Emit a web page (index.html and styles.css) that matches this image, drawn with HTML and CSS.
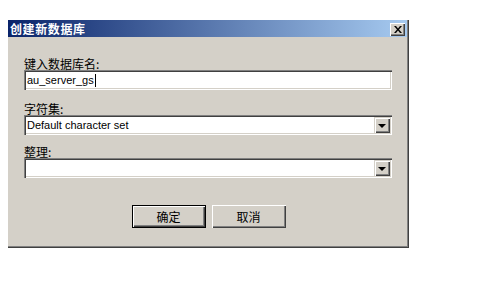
FILE: index.html
```html
<!DOCTYPE html>
<html lang="zh-CN">
<head>
  <meta charset="UTF-8">
  <title>创建新数据库</title>
  <link rel="stylesheet" href="styles.css">
</head>
<body>

  <div class="dialog">
    <div class="titlebar">
      <span class="title">创建新数据库</span>
      <span class="close">
        <svg width="8" height="7" viewBox="0 0 8 7">
          <path d="M0 0h2l2 2.5 2-2.5h2l-3 3.5 3 3.5h-2l-2-2.5-2 2.5h-2l3-3.5z" fill="#000"/>
        </svg>
      </span>
    </div>

    <div class="content">
      <label>键入数据库名:</label>
      <div class="field"><span>au_server_gs</span><span class="caret"></span></div>

      <label class="charset">字符集:</label>
      <div class="field select">
        <span>Default character set</span>
        <span class="arrow"><i></i></span>
      </div>

      <label class="collation">整理:</label>
      <div class="field select">
        <span></span>
        <span class="arrow"><i></i></span>
      </div>

      <div class="buttons">
        <div class="btn default">确定</div>
        <div class="btn">取消</div>
      </div>
    </div>
  </div>

</body>
</html>
```

FILE: styles.css
```css
body {
  margin: 0;
  background-color: #ffffff;
  font-family: "Noto Sans CJK SC", sans-serif;
  font-size: 12px;
  color: #000000;
}

.dialog {
  margin: 20px 0 0 8px;
  width: 401px;
  height: 228px;
  box-sizing: border-box;
  background-color: #d4d0c8;
  box-shadow: inset -1px -1px #404040, inset -2px -2px #808080;
}

.titlebar {
  display: flex;
  align-items: center;
  justify-content: space-between;
  height: 17px;
  margin-right: 2px;
  padding: 0 2px 0 2px;
  background: linear-gradient(to right, #0a246a, #a6caf0);
}

.title {
  color: #ffffff;
  font-weight: bold;
  letter-spacing: 0.6px;
  line-height: 17px;
}

.close {
  display: flex;
  align-items: center;
  justify-content: center;
  width: 15px;
  height: 13px;
  margin-top: 1px;
  background-color: #d4d0c8;
  box-shadow: inset 1px 1px #ffffff, inset -1px -1px #404040, inset -2px -2px #808080;
}

.content {
  padding: 21px 17px 0 16px;
}

label {
  display: block;
  line-height: 12px;
}

label.charset {
  margin-top: 13px;
}

label.collation {
  margin-top: 11px;
}

.field {
  display: flex;
  align-items: center;
  height: 20px;
  box-sizing: border-box;
  padding: 2px 2px 2px 3px;
  background-color: #ffffff;
  font-family: "Liberation Sans", sans-serif;
  font-size: 11px;
  box-shadow: inset 1px 1px #808080, inset 2px 2px #404040,
              inset -1px -1px #ffffff, inset -2px -2px #d4d0c8;
}

.caret {
  width: 1px;
  height: 13px;
  margin-left: 1px;
  background-color: #000000;
}

.select span:first-child {
  flex: 1;
}

.arrow {
  display: flex;
  align-items: center;
  justify-content: center;
  width: 16px;
  height: 16px;
  background-color: #d4d0c8;
  box-shadow: inset 1px 1px #d4d0c8, inset 2px 2px #ffffff,
              inset -1px -1px #404040, inset -2px -2px #808080;
}

.arrow i {
  width: 0;
  height: 0;
  border-left: 4px solid transparent;
  border-right: 4px solid transparent;
  border-top: 4px solid #000000;
  margin-top: 1px;
}

.buttons {
  display: flex;
  justify-content: center;
  gap: 6px;
  margin-top: 27px;
  padding-left: 1px;
}

.btn {
  display: flex;
  align-items: center;
  justify-content: center;
  width: 74px;
  height: 23px;
  box-sizing: border-box;
  background-color: #d4d0c8;
  box-shadow: inset 1px 1px #ffffff, inset -1px -1px #404040, inset -2px -2px #808080;
}

.btn.default {
  border: 1px solid #000000;
}
```
